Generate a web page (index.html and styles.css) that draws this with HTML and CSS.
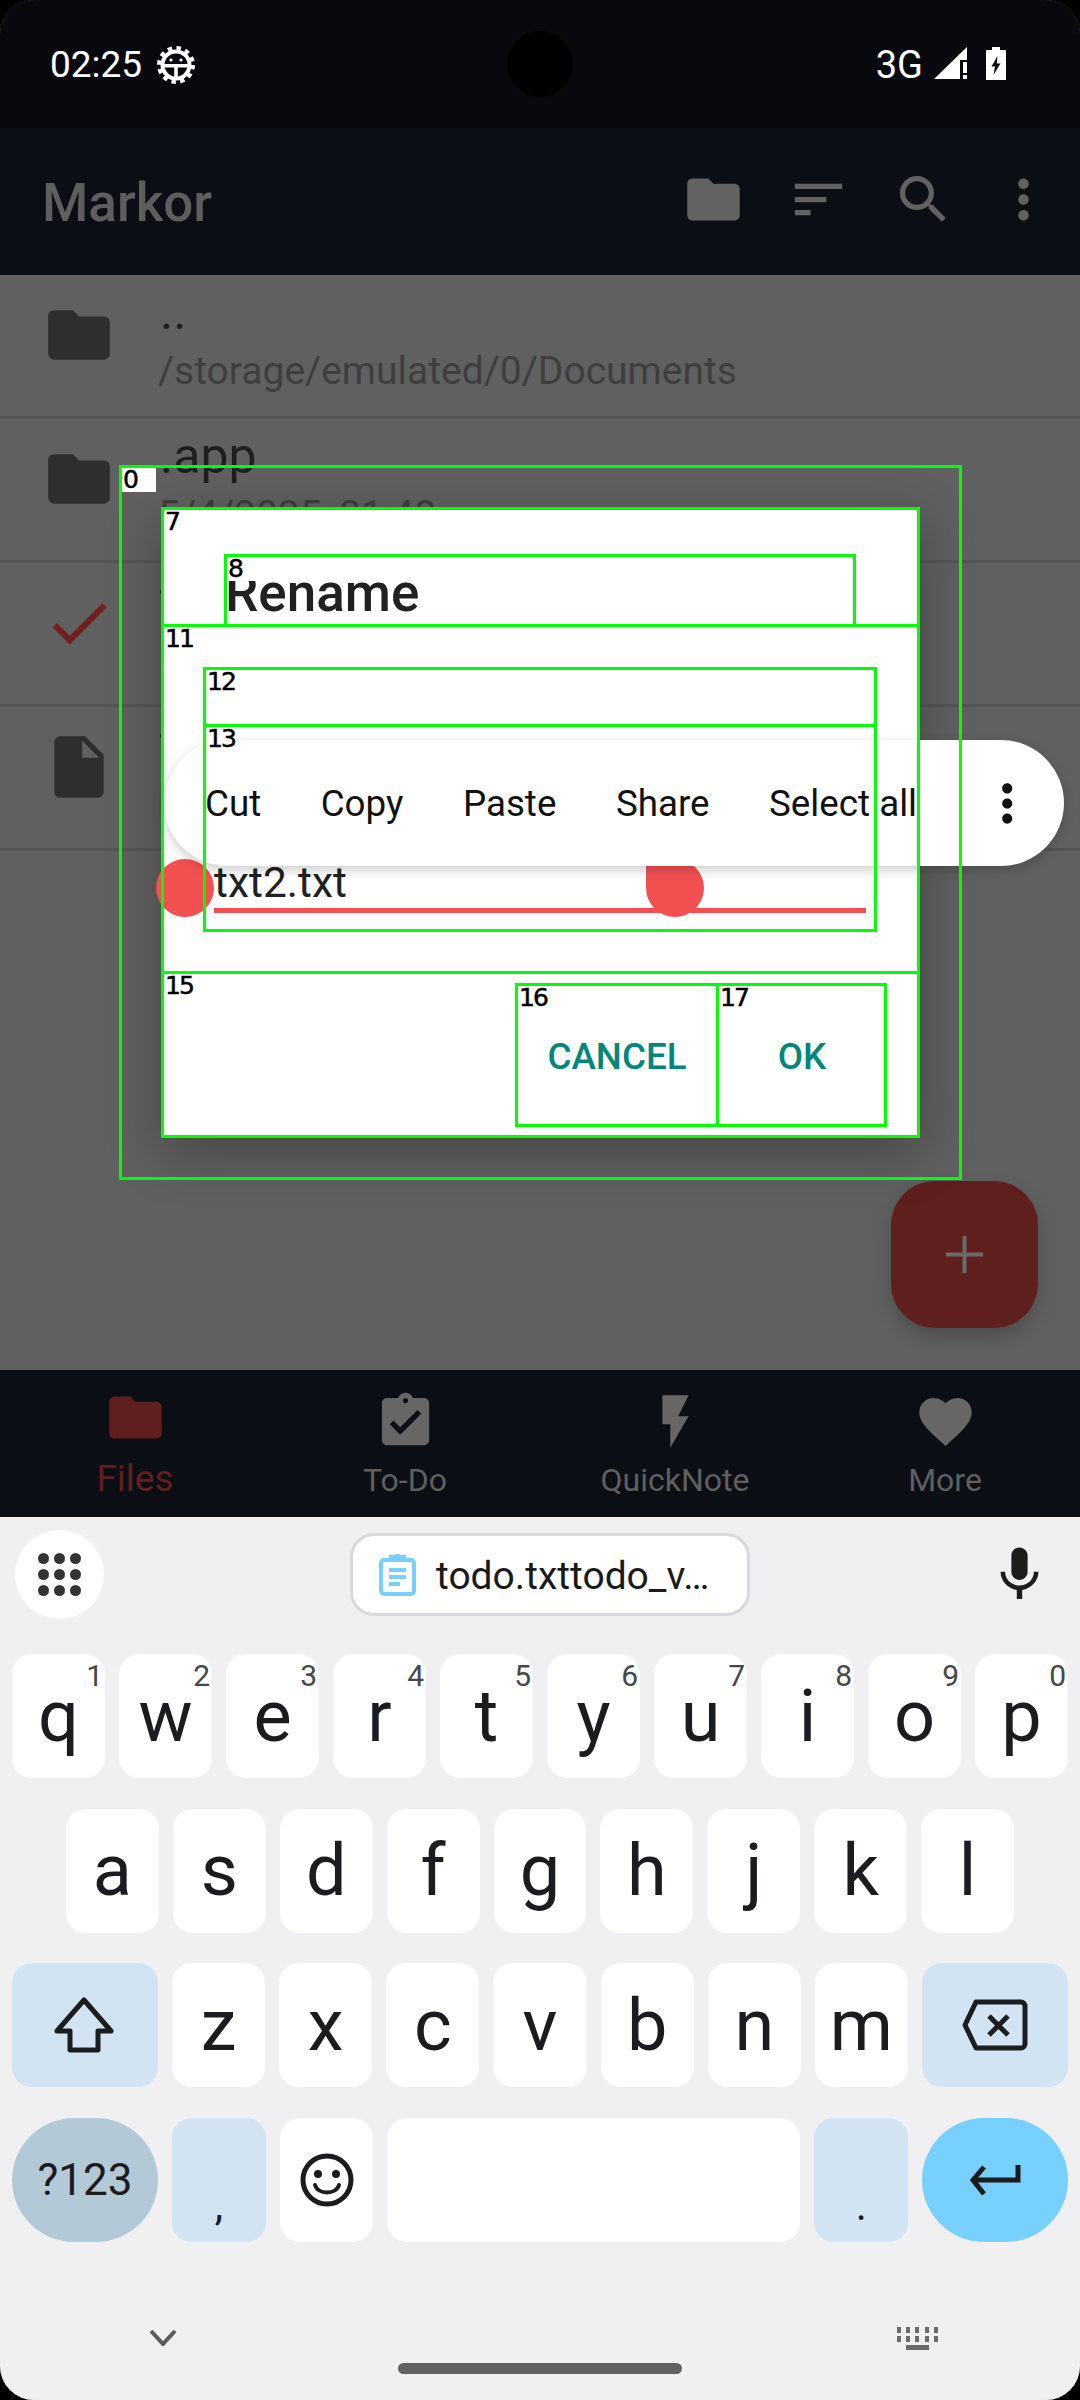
FILE: index.html
```html
<!DOCTYPE html>
<html lang="en">

<head>
    <meta charset="UTF-8" />
    <title>Markor</title>
    <link rel="stylesheet" href="styles.css">
</head>

<body>
    <div class="screen">
        <div class="status">
            <span class="clock">02:25</span>
            <svg class="gear" viewBox="0 0 38 38">
                <circle cx="19" cy="19" r="16.500" fill="none" stroke="#fff" stroke-width="5" stroke-dasharray="4.300 4.340" />
                <circle cx="19" cy="19" r="13.500" fill="none" stroke="#fff" stroke-width="4" />
                <rect x="6" y="18" width="26" height="3.500" fill="#fff" />
                <rect x="17.200" y="18" width="3.600" height="15" fill="#fff" />
                <circle cx="14" cy="14" r="1.600" fill="#fff" />
                <circle cx="24" cy="14" r="1.600" fill="#fff" />
            </svg>
            <span class="network">3G</span>
            <svg class="signal" width="33" height="33" viewBox="0 0 33 33">
                <path d="M0 32 33 0V13H26V32Z" fill="#fff" />
                <rect x="29" y="15" width="4" height="11" fill="#fff" />
                <rect x="29" y="28" width="4" height="4" fill="#fff" />
            </svg>
            <svg class="battery" width="20" height="33" viewBox="0 0 20 33">
                <path d="M6 0h8v3h5a1 1 0 0 1 1 1v29H0V4a1 1 0 0 1 1-1h5Z" fill="#fff" />
                <path d="M11.500 9 5.500 19.500h3.500L7.500 28l7-11.500h-3.700Z" fill="#07090e" />
            </svg>
        </div>

        <div class="appbar">
            <span class="app-title">Markor</span>
            <div class="actions">
                <svg viewBox="0 0 24 24"><path d="M10 4H4c-1.100 0-2 .9-2 2v12c0 1.100.9 2 2 2h16c1.100 0 2-.9 2-2V8c0-1.100-.9-2-2-2h-8l-2-2z" /></svg>
                <svg viewBox="0 0 24 24"><path d="M3 18h6v-2H3v2zM3 6v2h18V6H3zm0 7h12v-2H3v2z" /></svg>
                <svg viewBox="0 0 24 24"><path d="M15.500 14h-.79l-.28-.27C15.410 12.590 16 11.110 16 9.500 16 5.910 13.090 3 9.500 3S3 5.910 3 9.500 5.910 16 9.500 16c1.610 0 3.090-.59 4.230-1.570l.27.28v.79l5 4.990L20.490 19l-4.990-5zm-6 0C7.010 14 5 11.990 5 9.500S7.010 5 9.500 5 14 7.010 14 9.500 11.990 14 9.500 14z" /></svg>
                <svg viewBox="0 0 24 24"><path d="M12 8c1.100 0 2-.9 2-2s-.9-2-2-2-2 .9-2 2 .9 2 2 2zm0 2c-1.100 0-2 .9-2 2s.9 2 2 2 2-.9 2-2-.9-2-2-2zm0 6c-1.100 0-2 .9-2 2s.9 2 2 2 2-.9 2-2-.9-2-2-2z" /></svg>
            </div>
        </div>

        <div class="list">
            <div class="row">
                <svg class="row-icon" viewBox="0 0 24 24"><path d="M10 4H4c-1.100 0-2 .9-2 2v12c0 1.100.9 2 2 2h16c1.100 0 2-.9 2-2V8c0-1.100-.9-2-2-2h-8l-2-2z" /></svg>
                <div class="row-text">
                    <div class="row-title">..</div>
                    <div class="row-sub">/storage/emulated/0/Documents</div>
                </div>
            </div>
            <div class="row">
                <svg class="row-icon" viewBox="0 0 24 24"><path d="M10 4H4c-1.100 0-2 .9-2 2v12c0 1.100.9 2 2 2h16c1.100 0 2-.9 2-2V8c0-1.100-.9-2-2-2h-8l-2-2z" /></svg>
                <div class="row-text">
                    <div class="row-title">.app</div>
                    <div class="row-sub">5/4/2025, 01:48</div>
                </div>
            </div>
            <div class="row">
                <svg class="row-icon check" viewBox="0 0 24 24"><path d="M9 16.170 4.830 12l-1.420 1.410L9 19 21 7l-1.410-1.410z" /></svg>
                <div class="row-text">
                    <div class="row-title">todo.txt</div>
                    <div class="row-sub">5/4/2025, 01:48</div>
                </div>
            </div>
            <div class="row">
                <svg class="row-icon" viewBox="0 0 24 24"><path d="M6 2c-1.100 0-1.990.9-1.990 2L4 20c0 1.100.89 2 1.990 2H18c1.100 0 2-.9 2-2V8l-6-6H6zm7 7V3.500L18.500 9H13z" /></svg>
                <div class="row-text">
                    <div class="row-title">txt2.txt</div>
                    <div class="row-sub">5/4/2025, 01:48</div>
                </div>
            </div>
        </div>

        <div class="bottomnav">
            <div class="nav-item nav-active">
                <svg class="nav-folder" viewBox="0 0 24 24"><path d="M10 4H4c-1.100 0-2 .9-2 2v12c0 1.100.9 2 2 2h16c1.100 0 2-.9 2-2V8c0-1.100-.9-2-2-2h-8l-2-2z" /></svg>
                <span>Files</span>
            </div>
            <div class="nav-item">
                <svg viewBox="0 0 24 24"><path d="M19 3h-4.180C14.400 1.840 13.300 1 12 1c-1.300 0-2.400.84-2.820 2H5c-1.100 0-2 .9-2 2v14c0 1.100.9 2 2 2h14c1.100 0 2-.9 2-2V5c0-1.100-.9-2-2-2zm-7 0c.55 0 1 .45 1 1s-.45 1-1 1-1-.45-1-1 .45-1 1-1zm-2 14l-4-4 1.410-1.410L10 14.170l6.590-6.590L18 9l-8 8z" /></svg>
                <span>To-Do</span>
            </div>
            <div class="nav-item">
                <svg viewBox="0 0 24 24"><path d="M7 2v11h3v9l7-12h-4l4-8z" /></svg>
                <span>QuickNote</span>
            </div>
            <div class="nav-item">
                <svg viewBox="0 0 24 24"><path d="M12 21.350l-1.450-1.320C5.400 15.360 2 12.280 2 8.500 2 5.420 4.420 3 7.500 3c1.740 0 3.410.81 4.500 2.090C13.090 3.810 14.760 3 16.500 3 19.580 3 22 5.420 22 8.500c0 3.780-3.400 6.860-8.550 11.540L12 21.350z" /></svg>
                <span>More</span>
            </div>
        </div>

        <div class="keyboard">
            <div class="strip">
                <div class="grid-btn">
                    <svg width="43" height="43" viewBox="0 0 43 43">
                        <circle cx="5.500" cy="5.500" r="5.500" /><circle cx="21.500" cy="5.500" r="5.500" /><circle cx="37.500" cy="5.500" r="5.500" />
                        <circle cx="5.500" cy="21.500" r="5.500" /><circle cx="21.500" cy="21.500" r="5.500" /><circle cx="37.500" cy="21.500" r="5.500" />
                        <circle cx="5.500" cy="37.500" r="5.500" /><circle cx="21.500" cy="37.500" r="5.500" /><circle cx="37.500" cy="37.500" r="5.500" />
                    </svg>
                </div>
                <div class="chip">
                    <svg width="37" height="43" viewBox="0 0 37 43" fill="none" stroke="#78d0ff" stroke-width="4">
                        <rect x="2" y="7" width="33" height="34" rx="3" />
                        <path d="M12 7V4h4a3 3 0 0 1 5 0h4v3Z" fill="#78d0ff" />
                        <path d="M10 17H27M10 24H27M10 31H21" />
                    </svg>
                    <span>todo.txttodo_v…</span>
                </div>
                <svg class="mic" viewBox="0 0 24 24"><path d="M12 14c1.660 0 2.990-1.340 2.990-3L15 5c0-1.660-1.340-3-3-3S9 3.340 9 5v6c0 1.660 1.340 3 3 3zm5.300-3c0 3-2.540 5.100-5.300 5.100S6.700 14 6.700 11H5c0 3.410 2.720 6.230 6 6.720V21h2v-3.280c3.280-.48 6-3.300 6-6.720h-1.700z" /></svg>
            </div>

            <div class="keys">
                <div class="key-row">
                    <div class="key">q<sup>1</sup></div>
                    <div class="key">w<sup>2</sup></div>
                    <div class="key">e<sup>3</sup></div>
                    <div class="key">r<sup>4</sup></div>
                    <div class="key">t<sup>5</sup></div>
                    <div class="key">y<sup>6</sup></div>
                    <div class="key">u<sup>7</sup></div>
                    <div class="key">i<sup>8</sup></div>
                    <div class="key">o<sup>9</sup></div>
                    <div class="key">p<sup>0</sup></div>
                </div>
                <div class="key-row key-row-home">
                    <div class="key">a</div>
                    <div class="key">s</div>
                    <div class="key">d</div>
                    <div class="key">f</div>
                    <div class="key">g</div>
                    <div class="key">h</div>
                    <div class="key">j</div>
                    <div class="key">k</div>
                    <div class="key">l</div>
                </div>
                <div class="key-row">
                    <div class="key key-mod">
                        <svg class="shift-icon" width="60" height="56" viewBox="0 0 60 56" fill="none" stroke="#1b1c1f" stroke-width="5" stroke-linejoin="round"><path d="M30 3 57 34H44V53H16V34H3Z" /></svg>
                    </div>
                    <div class="key">z</div>
                    <div class="key">x</div>
                    <div class="key">c</div>
                    <div class="key">v</div>
                    <div class="key">b</div>
                    <div class="key">n</div>
                    <div class="key">m</div>
                    <div class="key key-mod">
                        <svg width="66" height="52" viewBox="0 0 66 52" fill="none" stroke="#1b1c1f" stroke-width="5" stroke-linejoin="round"><path d="M3 26 14 3H59a4 4 0 0 1 4 4V45a4 4 0 0 1-4 4H14Z" /><path d="M27 17 46 36M46 17 27 36" /></svg>
                    </div>
                </div>
                <div class="key-row">
                    <div class="key key-wide key-symbols">?123</div>
                    <div class="key key-punct">,</div>
                    <div class="key">
                        <svg width="54" height="54" viewBox="0 0 54 54" fill="none" stroke="#1b1c1f" stroke-width="5"><circle cx="27" cy="27" r="24" /><path d="M15 32c3 10 21 10 24 0" stroke-width="4" stroke-linecap="round" /><circle cx="18" cy="21" r="4" fill="#1b1c1f" stroke="none" /><circle cx="36" cy="21" r="4" fill="#1b1c1f" stroke="none" /></svg>
                    </div>
                    <div class="key key-space"></div>
                    <div class="key key-punct">.</div>
                    <div class="key key-wide key-enter">
                        <svg width="52" height="32" viewBox="0 0 52 32" fill="none" stroke="#1b1c1f" stroke-width="5"><path d="M49 1V16H5" /><path d="M15 3 4 16 15 30" /></svg>
                    </div>
                </div>
            </div>

            <div class="kbd-nav">
                <svg width="28" height="16" viewBox="0 0 28 16" fill="none" stroke="#5c5c5c" stroke-width="4"><path d="M2 1 14 14 26 1" /></svg>
                <svg width="41" height="23" viewBox="0 0 41 23" fill="#6b6b6b">
                    <rect x="0" y="0" width="4" height="6" /><rect x="9" y="0" width="4" height="6" /><rect x="18" y="0" width="4" height="6" /><rect x="28" y="0" width="4" height="6" /><rect x="37" y="0" width="4" height="6" />
                    <rect x="0" y="9" width="4" height="6" /><rect x="9" y="9" width="4" height="6" /><rect x="18" y="9" width="4" height="6" /><rect x="28" y="9" width="4" height="6" /><rect x="37" y="9" width="4" height="6" />
                    <rect x="9" y="18" width="23" height="5" />
                </svg>
            </div>
            <div class="home-pill"></div>
        </div>

        <!-- things lying over the page -->
        <div class="camera"></div>

        <div class="fab">
            <svg width="37" height="37" viewBox="0 0 37 37"><path d="M16.500 0h4v16.500H37v4H20.500V37h-4V20.500H0v-4h16.500Z" fill="#6a6a6a" /></svg>
        </div>

        <div class="dialog">
            <div class="dialog-title">Rename</div>
            <div class="dialog-body">
                <div class="field">txt2.txt</div>
            </div>
            <div class="dialog-actions">
                <div class="btn btn-cancel">CANCEL</div>
                <div class="btn btn-ok">OK</div>
            </div>
        </div>

        <div class="handle handle-left"></div>
        <div class="handle handle-right"></div>

        <div class="toolbar">
            <span>Cut</span>
            <span>Copy</span>
            <span>Paste</span>
            <span>Share</span>
            <span>Select all</span>
            <svg class="toolbar-more" viewBox="0 0 24 24"><path d="M12 8c1.100 0 2-.9 2-2s-.9-2-2-2-2 .9-2 2 .9 2 2 2zm0 2c-1.100 0-2 .9-2 2s.9 2 2 2 2-.9 2-2-.9-2-2-2zm0 6c-1.100 0-2 .9-2 2s.9 2 2 2 2-.9 2-2-.9-2-2-2z" /></svg>
        </div>

        <!-- numbered element boxes drawn on top of the capture -->
        <div class="box box-0"><b>0</b></div>
        <div class="box box-7"><b>7</b></div>
        <div class="box box-8"><b>8</b></div>
        <div class="box box-11"><b>11</b></div>
        <div class="box box-12"><b>12</b></div>
        <div class="box box-13"><b>13</b></div>
        <div class="box box-15"><b>15</b></div>
        <div class="box box-16"><b>16</b></div>
        <div class="box box-17"><b>17</b></div>
    </div>
</body>

</html>
```

FILE: styles.css
```css
* {
    box-sizing: border-box;
}

body {
    margin: 0;
    background-color: #000;
    font-family: Roboto, "Noto Sans", sans-serif;
}

.screen {
    position: relative;
    width: 1080px;
    height: 2400px;
    display: flex;
    flex-direction: column;
    overflow: hidden;
    border-radius: 34px;
    background-color: #606060;
}

/* status bar */
.status {
    height: 128px;
    flex-shrink: 0;
    display: flex;
    align-items: flex-start;
    padding: 46px 74px 0 50px;
    background-color: #07090e;
    color: #fff;
}

.clock {
    font-size: 37px;
    line-height: 38px;
}

.gear {
    width: 38px;
    height: 38px;
    margin-left: 15px;
}

.network {
    margin-left: auto;
    font-size: 38px;
    line-height: 38px;
}

.signal {
    margin-left: 11px;
    margin-top: 1px;
}

.battery {
    margin-left: 19px;
    margin-top: 1px;
}

/* app bar */
.appbar {
    height: 147px;
    flex-shrink: 0;
    display: flex;
    align-items: center;
    justify-content: space-between;
    padding: 0 25px 0 42px;
    background-color: #0c0e16;
}

.app-title {
    font-size: 53px;
    font-weight: 500;
    color: #5e5e5e;
    padding-top: 3px;
}

.actions {
    display: flex;
    gap: 42px;
    margin-top: -4px;
}

.actions svg {
    width: 63px;
    height: 63px;
    fill: #626262;
}

.actions svg:last-child {
    margin-left: -5px;
}

/* file list */
.list {
    flex: 1;
    background-color: #606060;
}

.row {
    height: 144px;
    display: flex;
    align-items: flex-start;
    padding-left: 42px;
    border-bottom: 3px solid #555;
    overflow: hidden;
}

.row-icon {
    width: 74px;
    height: 74px;
    margin-top: 23px;
    margin-right: 44px;
    flex-shrink: 0;
    fill: #2e2e2e;
}

.row-icon.check {
    fill: #6f2020;
}

.row-text {
    padding-top: 9px;
}

.row-title {
    font-size: 50px;
    line-height: 56px;
    margin-bottom: 6px;
    color: #1e1e1e;
}

.row-sub {
    font-size: 39px;
    line-height: 50px;
    margin-left: -2px;
    color: #3e3e3e;
}

/* bottom navigation */
.bottomnav {
    height: 147px;
    flex-shrink: 0;
    display: flex;
    background-color: #0c0e16;
}

.nav-item {
    flex: 1;
    display: flex;
    flex-direction: column;
    align-items: center;
    padding-top: 20px;
    font-size: 32px;
    line-height: 40px;
    color: #5f5f5f;
}

.nav-item svg {
    width: 63px;
    height: 63px;
    margin-bottom: 7px;
    fill: #666;
}

.nav-active {
    font-size: 37px;
    color: #5f1f1f;
}

.nav-item .nav-folder {
    margin-top: -4px;
    margin-bottom: 10px;
    fill: #5f1f1f;
}

/* keyboard */
.keyboard {
    height: 883px;
    flex-shrink: 0;
    background-color: #f0f0f3;
}

.strip {
    height: 137px;
    display: flex;
    align-items: center;
    padding: 0 0 22px 15px;
}

.grid-btn {
    width: 89px;
    height: 89px;
    display: flex;
    align-items: center;
    justify-content: center;
    border-radius: 50%;
    background-color: #fff;
    fill: #333;
}

.chip {
    width: 400px;
    height: 83px;
    margin-left: 246px;
    display: flex;
    align-items: center;
    gap: 20px;
    padding-left: 26px;
    border: 3px solid #d8d9dc;
    border-radius: 24px;
    background-color: #fff;
    font-size: 39px;
    color: #1a1a1a;
    white-space: nowrap;
}

.chip span {
    padding-top: 3px;
}

.mic {
    width: 65px;
    height: 65px;
    margin-left: 237px;
    fill: #1c1c1c;
}

.keys {
    display: flex;
    flex-direction: column;
    gap: 30.5px;
    padding: 0 12px;
}

.key-row {
    height: 124px;
    display: flex;
    gap: 14px;
}

.key-row-home {
    padding: 0 54px;
}

.key {
    position: relative;
    flex: 1 1 0;
    display: flex;
    align-items: center;
    justify-content: center;
    border-radius: 20px;
    background-color: #fff;
    font-size: 72px;
    color: #1b1c1f;
}

.key sup {
    position: absolute;
    top: 7px;
    right: 2px;
    font-size: 30px;
    line-height: 30px;
    color: #45474a;
}

.key-mod {
    flex: 0 0 146px;
    background-color: #d2e4f3;
}

.shift-icon {
    margin-right: 2px;
}

.key-wide {
    flex: 0 0 146px;
    border-radius: 62px;
}

.key-symbols {
    background-color: #b3c9d7;
    font-size: 44px;
}

.key-enter {
    background-color: #78d0ff;
}

.key-punct {
    background-color: #d2e4f3;
    font-size: 42px;
    padding-top: 52px;
}

.key-space {
    flex: 0 0 413px;
}

.kbd-nav {
    display: flex;
    align-items: center;
    justify-content: space-between;
    height: 23px;
    margin-top: 85px;
    padding: 0 142px 0 149px;
}

.home-pill {
    width: 284px;
    height: 11px;
    margin: 13px auto 0;
    border-radius: 6px;
    background-color: #616161;
}

/* overlays */
.camera {
    position: absolute;
    left: 507px;
    top: 31px;
    width: 66px;
    height: 66px;
    border-radius: 50%;
    background-color: #000;
}

.fab {
    position: absolute;
    left: 891px;
    top: 1181px;
    width: 147px;
    height: 147px;
    display: flex;
    align-items: center;
    justify-content: center;
    border-radius: 44px;
    background-color: #5f1f1f;
    box-shadow: 0 8px 18px rgba(0, 0, 0, 0.2);
}

.dialog {
    position: absolute;
    left: 162px;
    top: 508px;
    width: 758px;
    height: 630px;
    display: flex;
    flex-direction: column;
    background-color: #fff;
    box-shadow: 0 14px 50px rgba(0, 0, 0, 0.28);
}

.dialog-title {
    height: 118px;
    padding: 55px 0 0 63px;
    font-size: 53px;
    font-weight: 500;
    line-height: 60px;
    color: #212121;
}

.dialog-body {
    height: 347px;
    padding: 231px 54px 0 52px;
}

.field {
    height: 56px;
    font-size: 42.5px;
    line-height: 52px;
    color: #212121;
    border-bottom: 5px solid #f25050;
}

.dialog-actions {
    height: 165px;
    display: flex;
    justify-content: flex-end;
    padding: 12px 34px 0 0;
}

.btn {
    height: 142px;
    display: flex;
    align-items: center;
    justify-content: center;
    font-size: 36.75px;
    font-weight: 500;
    color: #00877a;
}

.btn-cancel {
    width: 202px;
}

.btn-ok {
    width: 168px;
}

.handle {
    position: absolute;
    top: 859px;
    width: 58px;
    height: 58px;
    border-radius: 50%;
    background-color: #f25050;
}

.handle-left {
    left: 156px;
}

.handle-right {
    left: 646px;
    border-top-left-radius: 0;
}

.toolbar {
    position: absolute;
    left: 164px;
    top: 740px;
    width: 900px;
    height: 126px;
    display: flex;
    align-items: center;
    gap: 59.5px;
    padding-left: 41px;
    border-radius: 63px;
    background-color: #fff;
    box-shadow: 0 4px 12px rgba(0, 0, 0, 0.2);
    font-size: 36.75px;
    color: #111;
    white-space: nowrap;
}

.toolbar-more {
    width: 63px;
    height: 63px;
    margin-left: auto;
    margin-right: 27px;
    fill: #111;
}

/* numbered boxes */
.box {
    position: absolute;
    border: 3px solid #0f0;
}

.box b {
    display: block;
    width: 34px;
    height: 24px;
    padding-left: 1px;
    background-color: #fff;
    font-family: "DejaVu Sans", sans-serif;
    font-size: 25px;
    font-weight: normal;
    line-height: 24px;
    color: #000;
    letter-spacing: -2px;
    -webkit-text-stroke: 0.5px #000;
}

.box-0 {
    left: 119px;
    top: 465px;
    width: 843px;
    height: 715px;
}

.box-7 {
    left: 161px;
    top: 507px;
    width: 759px;
    height: 631px;
}

.box-8 {
    left: 224px;
    top: 554px;
    width: 632px;
    height: 73px;
}

.box-11 {
    left: 161px;
    top: 624px;
    width: 759px;
    height: 350px;
}

.box-12 {
    left: 203px;
    top: 667px;
    width: 674px;
    height: 60px;
}

.box-13 {
    left: 203px;
    top: 724px;
    width: 674px;
    height: 208px;
}

.box-15 {
    left: 161px;
    top: 971px;
    width: 759px;
    height: 167px;
}

.box-16 {
    left: 515px;
    top: 983px;
    width: 204px;
    height: 144px;
}

.box-17 {
    left: 716px;
    top: 983px;
    width: 171px;
    height: 144px;
}
```
